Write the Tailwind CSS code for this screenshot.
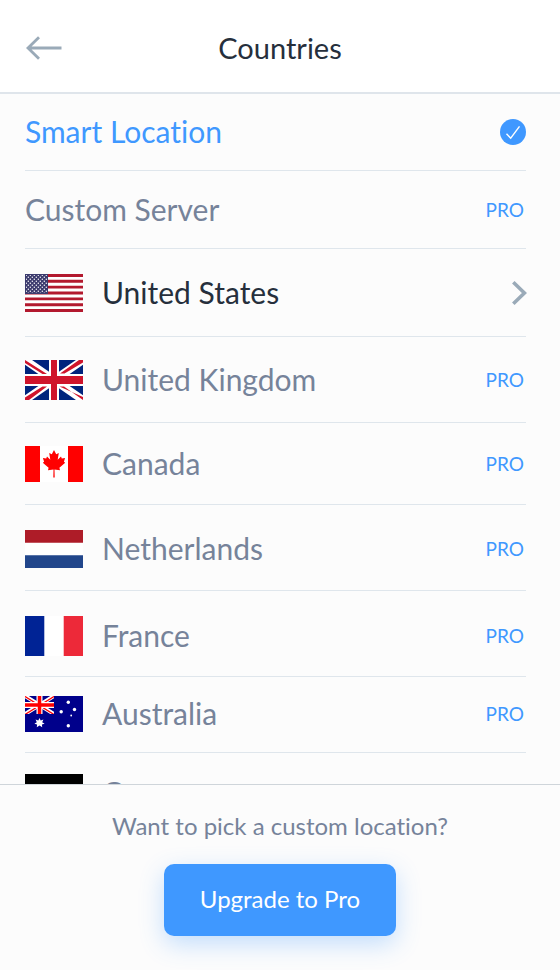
<!DOCTYPE html>
<html lang="en">
<head>
<meta charset="utf-8">
<meta name="viewport" content="width=device-width, initial-scale=1">
<title>Countries</title>
<script src="https://cdn.jsdelivr.net/npm/@tailwindcss/browser@4"></script>
</head>
<body class="flex h-screen flex-col bg-[#fcfcfc] font-['Lato','Liberation_Sans',sans-serif] text-[29px] leading-9 text-[#76839a] [font-variant-ligatures:none]">
  <header class="grid shrink-0 grid-cols-[1fr_auto_1fr] items-center border-b-2 border-[#dfe5eb] bg-white px-[26px] pt-[30px] pb-[26px]">
    <button type="button" aria-label="Back" class="justify-self-start">
      <svg class="block h-6 w-9" viewBox="0 0 36 24" fill="none" stroke="#9aaab8" stroke-width="2.8"><path d="M35.500 12H2M13 1.200L2 12l11 10.800"/></svg>
    </button>
    <h1 class="text-[#262f3c]">Countries</h1>
  </header>

  <main class="min-h-0 flex-1 overflow-hidden pr-[34px] pl-[25px] text-[30px] leading-[34px]">
    <ul>
      <li class="border-b border-[#dfe6ec]">
        <button type="button" class="flex w-full items-center justify-between py-5 text-[#3f98ff]">
          <span class="pb-0.5">Smart Location</span>
          <svg class="size-[26px]" viewBox="0 0 26 26" fill="none"><circle cx="13" cy="13" r="13" fill="#3f98ff"/><path d="M6.500 14.800l4.200 4.400L19.500 7.300" stroke="#fff" stroke-width="1.400"/></svg>
        </button>
      </li>
      <li class="border-b border-[#dfe6ec]">
        <button type="button" class="flex w-full items-center justify-between pt-[21px] pb-5">
          <span class="pb-0.5">Custom Server</span>
          <span class="pr-0.5 text-[19px] text-[#3f98ff]">PRO</span>
        </button>
      </li>
      <li class="border-b border-[#dfe6ec]">
        <button type="button" class="flex w-full items-center gap-[19px] pt-[25px] pb-6 text-[#262f3c]">
          <svg class="h-[38px] w-[58px]" viewBox="0 0 58 38">
            <defs>
              <pattern id="stars" width="4" height="4" patternUnits="userSpaceOnUse"><circle cx="1.300" cy="1.300" r=".7" fill="#fff"/><circle cx="3.300" cy="3.300" r=".7" fill="#fff"/></pattern>
            </defs>
            <path fill="#fff" d="M0 0h58v38H0z"/>
            <path stroke="#b3192e" stroke-width="2.920" d="M0 1.460h58M0 7.310h58M0 13.150h58M0 19h58M0 24.850h58M0 30.690h58M0 36.540h58"/>
            <path fill="#3c3b6e" d="M0 0h23v20H0z"/>
            <path fill="url(#stars)" d="M1 1h21v18H1z"/>
          </svg>
          <span class="pb-0.5">United States</span>
          <svg class="-mr-px ml-auto h-6 w-[15px]" viewBox="0 0 15 24" fill="none" stroke="#9aaab8" stroke-width="3.600"><path d="M1.300 1.300L12.400 12 1.300 22.700"/></svg>
        </button>
      </li>
      <li class="border-b border-[#dfe6ec]">
        <button type="button" class="flex w-full items-center gap-[19px] pt-[23px] pb-[22px]">
          <svg class="h-10 w-[58px]" viewBox="0 0 58 40">
            <path fill="#00247d" d="M0 0h58v40H0z"/>
            <path stroke="#fff" stroke-width="8" d="M0 0l58 40M58 0L0 40"/>
            <path fill="#cf142b" d="M0 0l22 14h-4.500L0 3zM58 0h-4L35 13.500h4.500L58 2.500zM0 40h4l18-13.500h-4.500L0 37.500zM58 40l-19-13.500h-4.500L58 37z"/>
            <path stroke="#fff" stroke-width="12" d="M0 20h58"/>
            <path stroke="#fff" stroke-width="10" d="M29 0v40"/>
            <path stroke="#cf142b" stroke-width="8" d="M0 20h58"/>
            <path stroke="#cf142b" stroke-width="6" d="M29 0v40"/>
          </svg>
          <span class="pb-0.5">United Kingdom</span>
          <span class="ml-auto pr-0.5 text-[19px] text-[#3f98ff]">PRO</span>
        </button>
      </li>
      <li class="border-b border-[#dfe6ec]">
        <button type="button" class="flex w-full items-center gap-[19px] pt-[23px] pb-[22px]">
          <svg class="h-9 w-[58px]" viewBox="0 0 58 36">
            <path fill="#fff" d="M0 0h58v36H0z"/>
            <path fill="#f00" d="M0 0h15v36H0zM43 0h15v36H43zM29 4l2.200 4.200 2.600-1.200-1.100 6.800 3.300-3.200.8 1.900 3.300-.5-1.200 3.800 1.300 1-5.800 5 .6 2.400-5.500-.8.200 8h-1.400l.2-8-5.500.8.600-2.400-5.800-5 1.300-1-1.200-3.800 3.300.5.800-1.900 3.300 3.200L24.200 7l2.600 1.200z"/>
          </svg>
          <span class="pb-0.5">Canada</span>
          <span class="ml-auto pr-0.5 text-[19px] text-[#3f98ff]">PRO</span>
        </button>
      </li>
      <li class="border-b border-[#dfe6ec]">
        <button type="button" class="flex w-full items-center gap-[19px] pt-[25px] pb-[22px]">
          <svg class="h-[38px] w-[58px]" viewBox="0 0 58 38">
            <path fill="#fff" d="M0 0h58v38H0z"/>
            <path fill="#ae1c28" d="M0 0h58v12.700H0z"/>
            <path fill="#21468b" d="M0 25.300h58V38H0z"/>
          </svg>
          <span class="pb-0.5">Netherlands</span>
          <span class="ml-auto pr-0.5 text-[19px] text-[#3f98ff]">PRO</span>
        </button>
      </li>
      <li class="border-b border-[#dfe6ec]">
        <button type="button" class="flex w-full items-center gap-[19px] pt-[25px] pb-5">
          <svg class="h-10 w-[58px]" viewBox="0 0 58 40">
            <path fill="#fff" d="M0 0h58v40H0z"/>
            <path fill="#002395" d="M0 0h19.300v40H0z"/>
            <path fill="#ed2939" d="M38.700 0H58v40H38.700z"/>
          </svg>
          <span class="pb-0.5">France</span>
          <span class="ml-auto pr-0.5 text-[19px] text-[#3f98ff]">PRO</span>
        </button>
      </li>
      <li class="border-b border-[#dfe6ec]">
        <button type="button" class="flex w-full items-center gap-[19px] pt-[19px] pb-5">
          <svg class="h-9 w-[58px]" viewBox="0 0 58 36">
            <defs><clipPath id="au-canton"><path d="M0 0h29v18H0z"/></clipPath></defs>
            <path fill="#00008b" d="M0 0h58v36H0z"/>
            <g clip-path="url(#au-canton)">
              <path stroke="#fff" stroke-width="4" d="M0 0l29 18M29 0L0 18"/>
              <path stroke="#f00" stroke-width="1.300" d="M0 .500l29 18M29 .500L0 18.500"/>
              <path stroke="#fff" stroke-width="6" d="M14.500 0v18M0 9h29"/>
              <path stroke="#f00" stroke-width="3.500" d="M14.500 0v18M0 9h29"/>
            </g>
            <path fill="#fff" d="M14.500 22l1.200 2.500 2.700-.9-1.200 2.600 2.400 1.500-2.700.7.300 2.900-2.700-1.900-2.700 1.900.3-2.900-2.700-.7 2.400-1.500-1.200-2.600 2.700.9z"/>
            <g fill="#fff"><circle cx="43.300" cy="6.300" r="1.700"/><circle cx="36.200" cy="15.800" r="1.700"/><circle cx="49.500" cy="13.500" r="1.700"/><circle cx="46.200" cy="19.500" r=".9"/><circle cx="43.300" cy="29.800" r="1.700"/></g>
          </svg>
          <span class="pb-0.5">Australia</span>
          <span class="ml-auto pr-0.5 text-[19px] text-[#3f98ff]">PRO</span>
        </button>
      </li>
      <li class="border-b border-[#dfe6ec]">
        <button type="button" class="flex w-full items-center gap-[19px] pt-[21px] pb-5">
          <svg class="h-[38px] w-[58px]" viewBox="0 0 58 38">
            <path d="M0 0h58v12.700H0z"/>
            <path fill="#d00" d="M0 12.700h58v12.600H0z"/>
            <path fill="#ffce00" d="M0 25.300h58V38H0z"/>
          </svg>
          <span class="pb-0.5">Germany</span>
          <span class="ml-auto pr-0.5 text-[19px] text-[#3f98ff]">PRO</span>
        </button>
      </li>
    </ul>
  </main>

  <footer class="flex shrink-0 flex-col items-center gap-5 border-t border-[#cfd5da] px-6 pt-[23px] pb-[34px] text-[24px] leading-9">
    <p>Want to pick a custom location?</p>
    <button type="button" class="rounded-[10px] bg-[#3f98ff] px-9 pt-[17px] pb-[19px] text-white shadow-[0_8px_24px_rgba(63,152,255,0.3)]">Upgrade to Pro</button>
  </footer>
</body>
</html>
